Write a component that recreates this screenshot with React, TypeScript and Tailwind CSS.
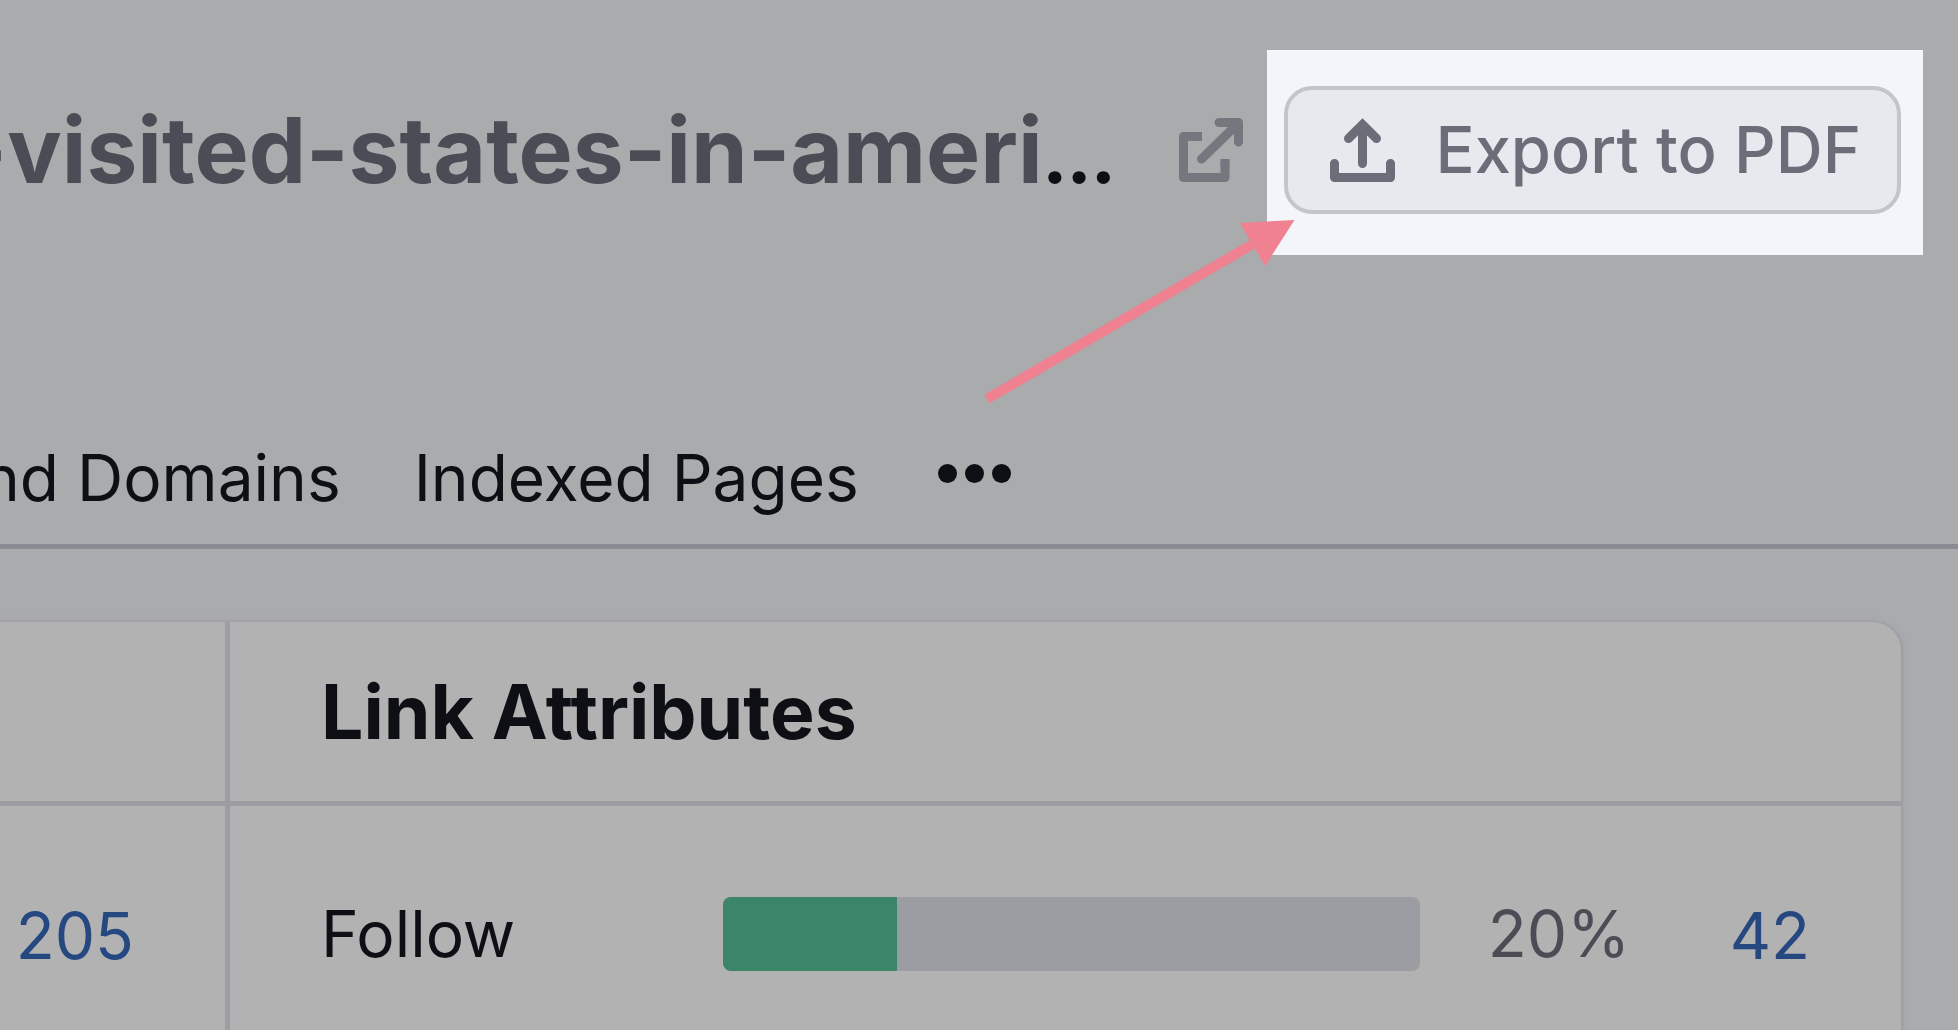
import React from 'react';

const attributes = [{ label: 'Follow', percent: 20, share: 25, count: 42 }];

function ExternalIcon() {
  return (
    <svg viewBox="0 0 64 64" className="size-16" fill="none" stroke="currentColor" strokeWidth="9" strokeLinejoin="round" aria-hidden="true">
      <path d="M23 18.500H4.500v41h41.500V41" />
      <path d="M46 45.500v1" strokeLinecap="round" />
      <path d="M22.500 41 58 6.500M40 4.500h19.500V24" strokeLinecap="round" />
      <path d="M49 9h9v9z" fill="currentColor" stroke="none" />
    </svg>
  );
}

function UploadIcon() {
  return (
    <svg viewBox="0 0 65 64" className="h-16 w-[65px]" fill="none" stroke="currentColor" strokeWidth="9" strokeLinecap="round" aria-hidden="true">
      <path d="M4.5 45.5v14h56v-14" strokeLinejoin="round" />
      <path d="M32.5 8v37.5M18.5 20.5l14-14 14 14" />
    </svg>
  );
}

function Pointer() {
  return (
    <svg viewBox="0 0 320 200" className="pointer-events-none absolute -left-[287px] top-[162px] h-[200px] w-[320px]" aria-hidden="true">
      <path d="M7 187 278 29" stroke="#ef8190" strokeWidth="10" />
      <path d="M260 11l54.500-3L285 54z" fill="#ef8190" />
    </svg>
  );
}

function Header() {
  return (
    <header className="flex items-center pr-[35px] pt-[50px]">
      <h1 className="flex min-w-0 flex-1 items-baseline justify-end overflow-hidden whitespace-nowrap pb-[6px] text-[91px] leading-[112px] font-bold">
        <span className="text-[#4b4c55]">-visited-states-in-ameri</span>
        <span className="text-[65px] leading-20 font-black">…</span>
      </h1>
      <a href="#page" aria-label="Open page" className="mx-6 mb-[5px] ml-16 text-[#75767e]">
        <ExternalIcon />
      </a>
      <div className="relative bg-[#f4f5fa] pb-[41px] pl-[17px] pr-[22px] pt-9">
        <button className="flex h-32 items-center gap-10 rounded-[28px] border-4 border-[#c4c5cc] bg-[#e8e9ef] pl-[42px] pr-9 text-[65px] leading-20 font-medium whitespace-nowrap text-[#6b6d78]">
          <UploadIcon />
          Export to PDF
        </button>
        <Pointer />
      </div>
    </header>
  );
}

function Tabs() {
  return (
    <nav className="mt-[183px] flex items-center gap-[73px] border-b-[5px] border-[#8b8b93] pb-[26px] leading-20 whitespace-nowrap">
      <a href="#domains" className="-ml-[18px]">nd Domains</a>
      <a href="#indexed">Indexed Pages</a>
      <button aria-label="More tabs" className="mb-2.5 ml-[6px] flex gap-2">
        <span className="size-[19px] rounded-full bg-[#0e0f15]" />
        <span className="size-[19px] rounded-full bg-[#0e0f15]" />
        <span className="size-[19px] rounded-full bg-[#0e0f15]" />
      </button>
    </nav>
  );
}

export default function App() {
  return (
    <div className="flex min-h-screen flex-col overflow-hidden bg-[#a9abad] font-[Inter,sans-serif] text-[64px] text-[#0e0f15]">
      <Header />
      <Tabs />
      <main className="mt-[73px] mr-[57px] flex flex-1 rounded-tr-[28px] bg-[#b2b2b2] shadow-[0_1px_2px_2px_#9c9ca3,0_2px_8px_2px_#a4a5a9]">
        <section className="w-[225px]">
          <div className="h-[184px] border-b-[5px] border-[#9c9ca3]" />
          <div className="-mb-8 flex h-[256px] items-center justify-end pr-[91px]">
            <a href="#total" className="pt-1 leading-20 text-[#24487f]">205</a>
          </div>
        </section>
        <section className="min-w-0 flex-1 border-l-[5px] border-[#9c9ca3]">
          <div className="flex h-[184px] items-center border-b-[5px] border-[#9c9ca3] pl-[91px]">
            <h2 className="text-[75px] leading-[96px] font-bold">Link Attributes</h2>
          </div>
          {attributes.map((item) => (
            <div key={item.label} className="-mb-8 flex h-[256px] items-center pl-[91px] pr-[91px] leading-20">
              <span className="w-[402px]">{item.label}</span>
              <div className="h-[74px] flex-1 overflow-hidden rounded-lg bg-[#9c9ca3]">
                <div className="h-full bg-[#3b8568]" style={{ width: `${item.share}%` }} />
              </div>
              <span className="w-[210px] text-right text-[#4b4c55]">{item.percent}%</span>
              <a href="#follow" className="w-[180px] pt-1 text-right text-[#24487f]">{item.count}</a>
            </div>
          ))}
        </section>
      </main>
    </div>
  );
}
